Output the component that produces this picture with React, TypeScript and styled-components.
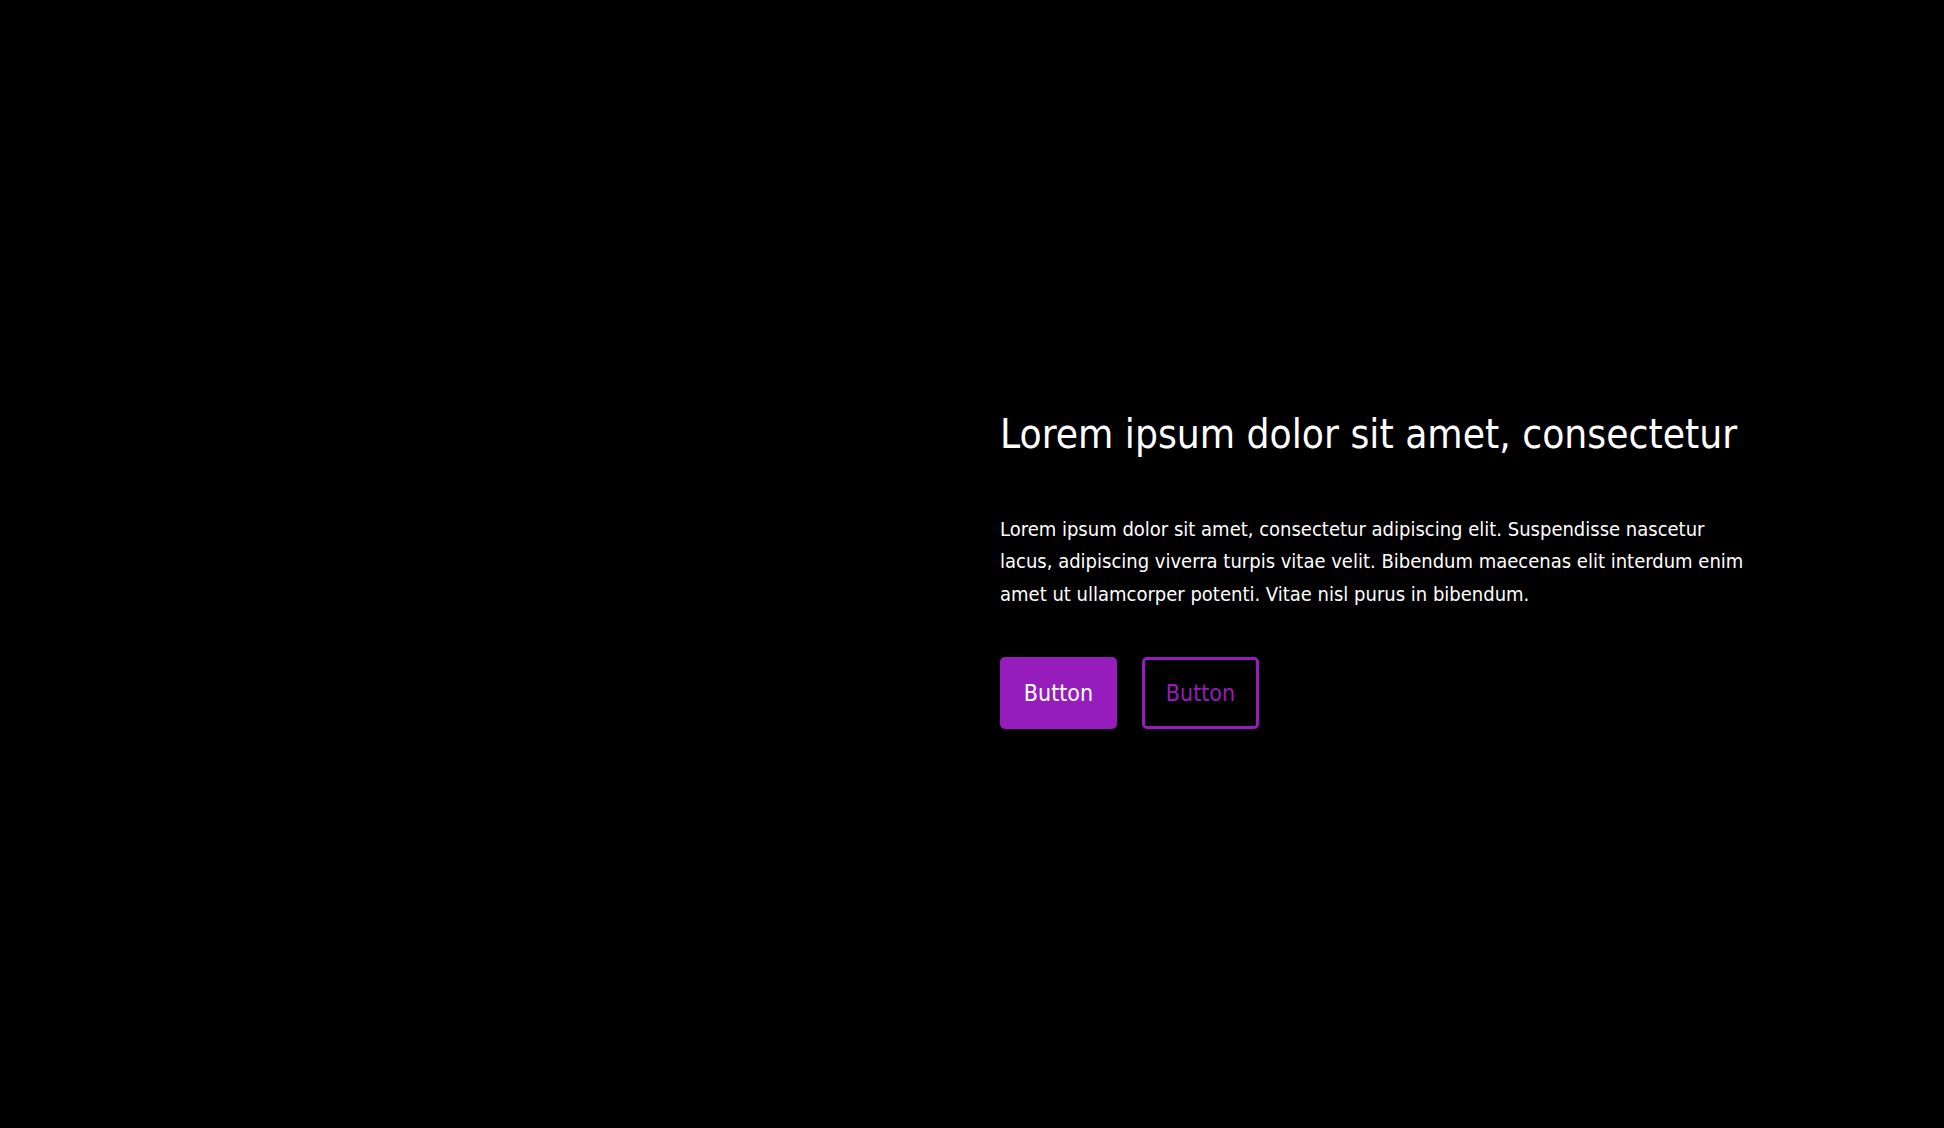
import styled, { createGlobalStyle } from "styled-components";

const GlobalStyle = createGlobalStyle`
	html, body {
		margin: 0;
		padding: 0;
		background: #000000;
	}
	body {
		font-family: "DejaVu Sans Condensed", "Liberation Sans Narrow", "DejaVu Sans", sans-serif;
		color: #ffffff;
	}
`;

function App() {
	return (
		<>
			<GlobalStyle />
			<Page>
				<Side />
				<Content>
					<Heading>Lorem ipsum dolor sit amet, consectetur</Heading>
					<Text>
						Lorem ipsum dolor sit amet, consectetur adipiscing elit. Suspendisse
						nascetur lacus, adipiscing viverra turpis vitae velit. Bibendum
						maecenas elit interdum enim amet ut ullamcorper potenti. Vitae nisl
						purus in bibendum.
					</Text>
					<Actions>
						<Button>Button</Button>
						<Button outline>Button</Button>
					</Actions>
				</Content>
			</Page>
		</>
	);
}

export default App;

const Page = styled.div`
	min-height: 100vh;
	display: grid;
	grid-template-columns: 1fr 1fr;
	background: #000000;
`;

const Side = styled.div``;

const Content = styled.div`
	display: flex;
	flex-direction: column;
	justify-content: center;
	align-items: flex-start;
	padding: 11px 0 0 28px;
	width: 760px;
`;

const Heading = styled.h1`
	margin: 0;
	font-size: 40.3px;
	font-weight: normal;
	line-height: 50px;
	white-space: nowrap;
`;

const Text = styled.p`
	margin: 53px 0 0;
	font-size: 20px;
	line-height: 32.5px;
`;

const Actions = styled.div`
	display: flex;
	gap: 25px;
	margin-top: 47px;
`;

const Button = styled.button<{ outline?: boolean }>`
	display: flex;
	align-items: center;
	justify-content: center;
	width: 117px;
	height: 72px;
	padding: 0;
	border-radius: 5px;
	border: 3px solid #961dbc;
	background: ${(p) => (p.outline ? "transparent" : "#961dbc")};
	color: ${(p) => (p.outline ? "#961dbc" : "#ffffff")};
	font-family: inherit;
	font-size: 23px;
	cursor: pointer;
`;
